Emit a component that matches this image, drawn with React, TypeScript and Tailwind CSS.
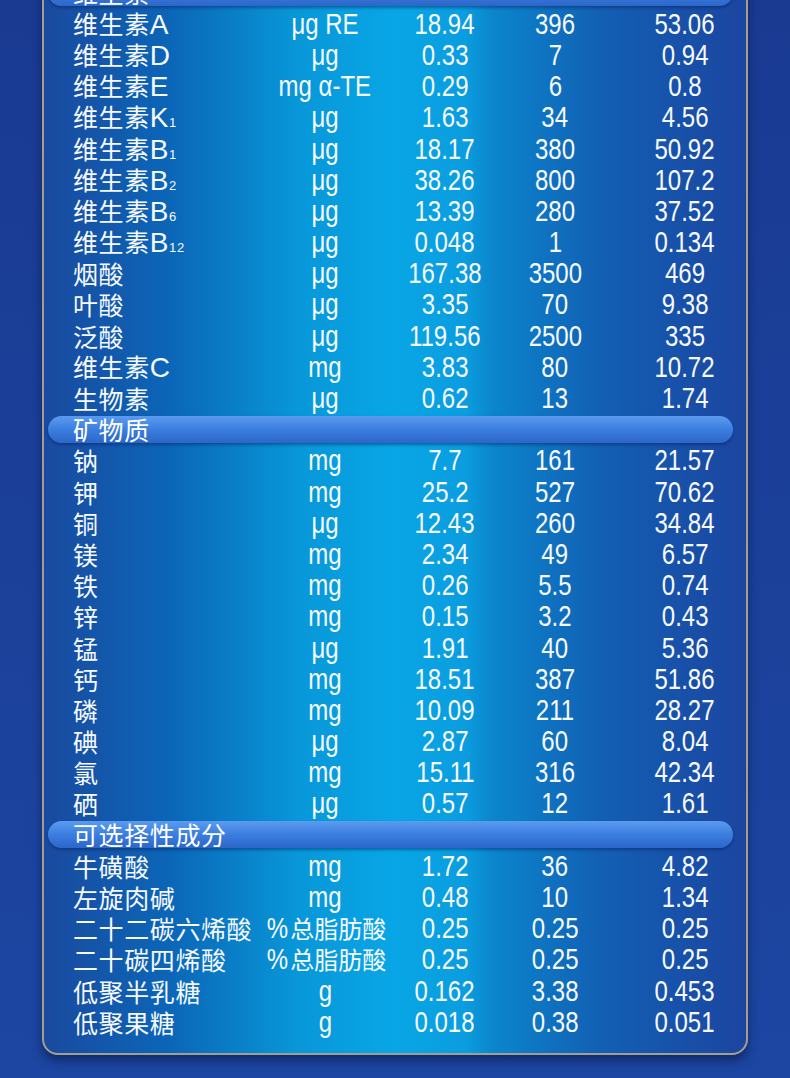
import React from "react";

type Row = {
  name: React.ReactNode;
  unit: React.ReactNode;
  per100g: string;
  per100kj: string;
  nrv: string;
};

type Section = {
  title: string;
  rows: Row[];
};

// Latin letter after a chinese name, with optional small index (K1, B12 ...)
const Vit = ({ letter, sub }: { letter: string; sub?: string }) => (
  <>
    维生素
    <span className="font-['Liberation_Sans',sans-serif] text-[28px] leading-none">{letter}</span>
    {sub && (
      <span className="font-['Liberation_Sans',sans-serif] text-[13px] leading-none">{sub}</span>
    )}
  </>
);

// condensed look for the digits and units (no narrow font installed)
const Narrow = ({ children }: { children: React.ReactNode }) => (
  <span className="inline-block scale-x-[0.8]">{children}</span>
);

const FatUnit = () => (
  <>
    <Narrow>%</Narrow>
    <span className="font-['Noto_Sans_CJK_SC',sans-serif] text-[24px] leading-none">总脂肪酸</span>
  </>
);

const sections: Section[] = [
  {
    title: "维生素",
    rows: [
      { name: <Vit letter="A" />, unit: "μg RE", per100g: "18.94", per100kj: "396", nrv: "53.06" },
      { name: <Vit letter="D" />, unit: "μg", per100g: "0.33", per100kj: "7", nrv: "0.94" },
      { name: <Vit letter="E" />, unit: "mg α-TE", per100g: "0.29", per100kj: "6", nrv: "0.8" },
      { name: <Vit letter="K" sub="1" />, unit: "μg", per100g: "1.63", per100kj: "34", nrv: "4.56" },
      { name: <Vit letter="B" sub="1" />, unit: "μg", per100g: "18.17", per100kj: "380", nrv: "50.92" },
      { name: <Vit letter="B" sub="2" />, unit: "μg", per100g: "38.26", per100kj: "800", nrv: "107.2" },
      { name: <Vit letter="B" sub="6" />, unit: "μg", per100g: "13.39", per100kj: "280", nrv: "37.52" },
      { name: <Vit letter="B" sub="12" />, unit: "μg", per100g: "0.048", per100kj: "1", nrv: "0.134" },
      { name: "烟酸", unit: "μg", per100g: "167.38", per100kj: "3500", nrv: "469" },
      { name: "叶酸", unit: "μg", per100g: "3.35", per100kj: "70", nrv: "9.38" },
      { name: "泛酸", unit: "μg", per100g: "119.56", per100kj: "2500", nrv: "335" },
      { name: <Vit letter="C" />, unit: "mg", per100g: "3.83", per100kj: "80", nrv: "10.72" },
      { name: "生物素", unit: "μg", per100g: "0.62", per100kj: "13", nrv: "1.74" },
    ],
  },
  {
    title: "矿物质",
    rows: [
      { name: "钠", unit: "mg", per100g: "7.7", per100kj: "161", nrv: "21.57" },
      { name: "钾", unit: "mg", per100g: "25.2", per100kj: "527", nrv: "70.62" },
      { name: "铜", unit: "μg", per100g: "12.43", per100kj: "260", nrv: "34.84" },
      { name: "镁", unit: "mg", per100g: "2.34", per100kj: "49", nrv: "6.57" },
      { name: "铁", unit: "mg", per100g: "0.26", per100kj: "5.5", nrv: "0.74" },
      { name: "锌", unit: "mg", per100g: "0.15", per100kj: "3.2", nrv: "0.43" },
      { name: "锰", unit: "μg", per100g: "1.91", per100kj: "40", nrv: "5.36" },
      { name: "钙", unit: "mg", per100g: "18.51", per100kj: "387", nrv: "51.86" },
      { name: "磷", unit: "mg", per100g: "10.09", per100kj: "211", nrv: "28.27" },
      { name: "碘", unit: "μg", per100g: "2.87", per100kj: "60", nrv: "8.04" },
      { name: "氯", unit: "mg", per100g: "15.11", per100kj: "316", nrv: "42.34" },
      { name: "硒", unit: "μg", per100g: "0.57", per100kj: "12", nrv: "1.61" },
    ],
  },
  {
    title: "可选择性成分",
    rows: [
      { name: "牛磺酸", unit: "mg", per100g: "1.72", per100kj: "36", nrv: "4.82" },
      { name: "左旋肉碱", unit: "mg", per100g: "0.48", per100kj: "10", nrv: "1.34" },
      { name: "二十二碳六烯酸", unit: <FatUnit />, per100g: "0.25", per100kj: "0.25", nrv: "0.25" },
      { name: "二十碳四烯酸", unit: <FatUnit />, per100g: "0.25", per100kj: "0.25", nrv: "0.25" },
      { name: "低聚半乳糖", unit: "g", per100g: "0.162", per100kj: "3.38", nrv: "0.453" },
      { name: "低聚果糖", unit: "g", per100g: "0.018", per100kj: "0.38", nrv: "0.051" },
    ],
  },
];

const numCls =
  "text-center whitespace-nowrap font-['Liberation_Sans',sans-serif] text-[30px] leading-[30px]";

const SectionBar = ({ title }: { title: string }) => (
  <div className="h-[31.2px] flex items-center pl-[4px] pr-[13px]">
    <div className="h-[27px] w-full rounded-full bg-gradient-to-b from-[#5b9bf0] via-[#3b7edf] to-[#2c66c9] shadow-[0_2px_3px_rgba(8,30,90,0.45)] flex items-center pl-[25px]">
      <span className="text-[25px] tracking-[0.6px] leading-none text-white">{title}</span>
    </div>
  </div>
);

const DataRow = ({ row }: { row: Row }) => (
  <div className="h-[31.2px] pl-[29px] grid grid-cols-[182px_140px_100px_120px_140px] items-center">
    <div className="text-[25px] tracking-[0.6px] leading-[28px] whitespace-nowrap">{row.name}</div>
    <div className={numCls}>
      {typeof row.unit === "string" ? <Narrow>{row.unit}</Narrow> : row.unit}
    </div>
    <div className={numCls}>
      <Narrow>{row.per100g}</Narrow>
    </div>
    <div className={numCls}>
      <Narrow>{row.per100kj}</Narrow>
    </div>
    <div className={numCls}>
      <Narrow>{row.nrv}</Narrow>
    </div>
  </div>
);

export default function App() {
  return (
    <div className="w-[790px] h-[1078px] overflow-hidden bg-gradient-to-b from-[#1a3a92] to-[#1c46a2] font-['Noto_Sans_CJK_SC',sans-serif] text-[#f6f9ff]">
      <div className="mx-[42px] -mt-[40px] pt-[15px] pb-[16px] rounded-[16px] border-2 border-[#a49f8c] bg-[linear-gradient(to_right,#1a4a9f_0%,#0b66b8_18%,#0897d8_36%,#08a6e6_50%,#0a9ddf_60%,#0b85cc_64%,#1260b4_79%,#1c45a0_100%)] shadow-[0_6px_10px_rgba(5,15,60,0.5)]">
        {sections.map((section) => (
          <div key={section.title}>
            <SectionBar title={section.title} />
            {section.rows.map((row, i) => (
              <DataRow key={i} row={row} />
            ))}
          </div>
        ))}
      </div>
    </div>
  );
}
